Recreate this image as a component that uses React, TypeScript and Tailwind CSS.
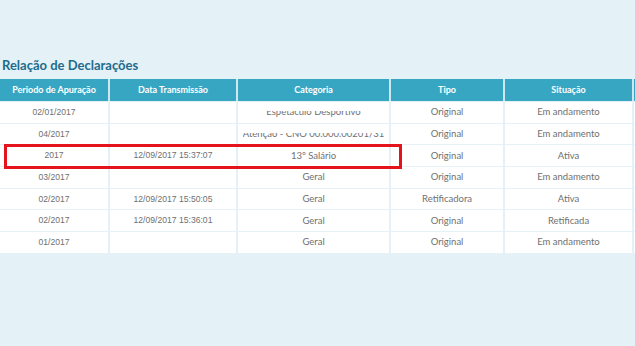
import React from "react";

const cols = [108, 126, 151, 112, 127, 40];

const rows: { p: string; d: string; c: string; t: string; s: string; clip?: number }[] = [
  { p: "02/01/2017", d: "", c: "Espetáculo Desportivo", t: "Original", s: "Em andamento", clip: 1 },
  { p: "04/2017", d: "", c: "Atenção - CNO 00.000.00201/31", t: "Original", s: "Em andamento", clip: 2 },
  { p: "2017", d: "12/09/2017 15:37:07", c: "13º Salário", t: "Original", s: "Ativa" },
  { p: "03/2017", d: "", c: "Geral", t: "Original", s: "Em andamento" },
  { p: "02/2017", d: "12/09/2017 15:50:05", c: "Geral", t: "Retificadora", s: "Ativa" },
  { p: "02/2017", d: "12/09/2017 15:36:01", c: "Geral", t: "Original", s: "Retificada" },
  { p: "01/2017", d: "", c: "Geral", t: "Original", s: "Em andamento" },
];

const headers = ["Periodo de Apuração", "Data Transmissão", "Categoria", "Tipo", "Situação", ""];

export default function App() {
  return (
    <div className="w-[635px] h-[346px] bg-[#e4f1f7] overflow-hidden relative" style={{ fontFamily: "Lato, 'Noto Sans', sans-serif" }}>
      <div className="pt-[56px] pl-[2px] h-[79px]">
        <h2 className="text-[13px] leading-[18px] font-bold text-[#1f6c8c]">Relação de Declarações</h2>
      </div>
      <div className="flex flex-col gap-[1px] w-[680px]">
        <div className="flex gap-[2px] bg-[#cfe8f0] h-[22px]">
          {headers.map((h, i) => (
            <div
              key={i}
              className="bg-[#37a6c3] text-white text-[9px] font-bold flex items-center justify-center shrink-0"
              style={{ width: cols[i] }}
            >
              {h}
            </div>
          ))}
        </div>
        {rows.map((r, ri) => {
          const vals = [r.p, r.d, r.c, r.t, r.s, ""];
          return (
            <div key={ri} className="flex gap-[2px] h-[20.7px] bg-[#e4f1f7]">
              {vals.map((v, i) => (
                <div
                  key={i}
                  className="bg-white text-[#707070] text-[9.5px] flex items-center justify-center shrink-0"
                  style={{ width: cols[i], fontFamily: i < 2 ? "'Liberation Sans', Arial, sans-serif" : undefined, fontSize: i < 2 ? "8.6px" : undefined }}
                >
                  {i === 2 && r.clip ? (
                    <div className="h-[6px] overflow-hidden flex items-end leading-[11px] mt-[3px]">{v}</div>
                  ) : (
                    v
                  )}
                </div>
              ))}
            </div>
          );
        })}
      </div>
      <div className="absolute left-[4px] top-[144px] w-[398px] h-[25px] border-[3px] border-[#e5141c]" />
    </div>
  );
}
